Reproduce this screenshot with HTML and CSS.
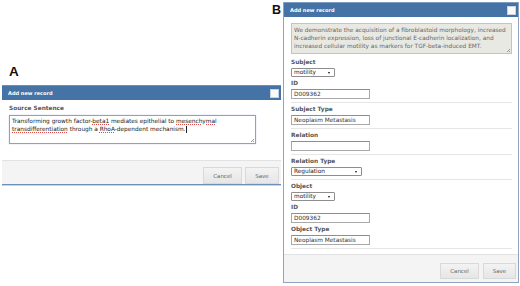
FILE: index.html
```html
<!DOCTYPE html>
<html>
<head>
<meta charset="utf-8">
<link rel="stylesheet" href="styles.css">
</head>
<body>
<div class="figure">
  <div class="col-a">
    <div class="fig-label">A</div>
    <div class="dialog dialog-a">
      <div class="dlg-head"><span class="dlg-title">Add new record</span><span class="chk"></span></div>
      <div class="dlg-body-a">
        <div class="lbl">Source Sentence</div>
        <div class="ta ta-focus">Transforming growth factor-<span class="sp">beta1</span> mediates epithelial to <span class="sp">mesenchymal</span> <span class="sp">transdifferentiation</span> through a <span class="sp">RhoA</span>-dependent mechanism.<span class="caret"></span><span class="grip"></span></div>
      </div>
      <div class="dlg-foot"><span class="btn btn-cancel">Cancel</span><span class="btn btn-save">Save</span></div>
    </div>
  </div>
  <div class="col-b">
    <div class="fig-label fig-label-b">B</div>
    <div class="dialog dialog-b">
      <div class="dlg-head"><span class="dlg-title">Add new record</span><span class="chk"></span></div>
      <div class="dlg-body-b">
        <div class="ta ta-dis">We demonstrate the acquisition of a fibroblastoid morphology, increased N-cadherin expression, loss of junctional E-cadherin localization, and increased cellular motility as markers for TGF-beta-induced EMT.<span class="grip"></span></div>
        <div class="group">
          <div class="field"><div class="lbl">Subject</div><div class="sel sel-s">motility<span class="arr"></span></div></div>
          <div class="field"><div class="lbl">ID</div><div class="inp">D009362</div></div>
        </div>
        <div class="group">
          <div class="field"><div class="lbl">Subject Type</div><div class="inp">Neoplasm Metastasis</div></div>
        </div>
        <div class="group">
          <div class="field"><div class="lbl">Relation</div><div class="inp"></div></div>
        </div>
        <div class="group">
          <div class="field"><div class="lbl">Relation Type</div><div class="sel sel-l">Regulation<span class="arr"></span></div></div>
        </div>
        <div class="group">
          <div class="field"><div class="lbl">Object</div><div class="sel sel-s">motility<span class="arr"></span></div></div>
          <div class="field"><div class="lbl">ID</div><div class="inp">D009362</div></div>
          <div class="field"><div class="lbl">Object Type</div><div class="inp">Neoplasm Metastasis</div></div>
        </div>
      </div>
      <div class="dlg-foot dlg-foot-b"><span class="btn btn-cancel">Cancel</span><span class="btn btn-save">Save</span></div>
    </div>
  </div>
</div>
</body>
</html>
```
FILE: styles.css
```css
html, body { margin: 0; padding: 0; background: #fff; }
body { font-family: "DejaVu Sans", Verdana, sans-serif; font-size: 5.8px; color: #333; }
.figure { display: flex; align-items: flex-start; padding-left: 2px; }
.col-a { width: 279px; padding-top: 64px; }
.col-b { position: relative; width: 236px; margin-left: 2px; margin-top: 2px; }
.fig-label { font-family: "Liberation Sans", Arial, sans-serif; font-weight: bold; font-size: 13.5px; line-height: 15px; color: #111; margin-left: 7px; margin-bottom: 6px; }
.fig-label-b { position: absolute; left: -11px; top: 1px; margin: 0; font-size: 12.5px; }
.dialog { background: #fff; }
.dialog-a { border-bottom: 1px solid #6f90b6; box-shadow: 0 1px 0 #c7d4e4; }
.dialog-b { border: 1px solid #8ea4bf; border-top: none; height: 281px; display: flex; flex-direction: column; box-sizing: border-box; }
.dlg-head { height: 14px; background: #4673a6; border-top: 1px solid #6b90bb; display: flex; align-items: center; justify-content: space-between; padding: 0 2px 0 6px; flex: none; }
.dialog-b .dlg-head { height: 14px; border-top: 1px solid #7d9cc2; }
.dlg-title { color: #fff; font-weight: bold; font-size: 5.1px; letter-spacing: -0.05px; }
.chk { width: 7px; height: 7px; background: #fafafa; border: 1px solid #c8d3df; }
.lbl { font-weight: bold; color: #555; line-height: 8px; font-size: 5.8px; }
.dlg-body-a { padding: 4px 7px 16px 7px; }
.dlg-body-a .lbl { margin-bottom: 3px; }
.ta { position: relative; box-sizing: border-box; line-height: 8px; padding: 1px 2px; }
.ta-focus { width: 247px; height: 29px; border: 1px solid #86a4c8; color: #222; box-shadow: 0 0 1px #aac0dc; }
.sp { text-decoration: underline dotted #e04a4a; text-decoration-thickness: 0.6px; text-underline-offset: 1px; }
.caret { display: inline-block; width: 0.7px; height: 7px; background: #222; margin-left: 1px; vertical-align: -1.5px; }
.grip { position: absolute; right: 1px; bottom: 1px; width: 3px; height: 3px; background: linear-gradient(135deg, transparent 45%, #999 45%, #999 55%, transparent 55%, transparent 75%, #999 75%); }
.dlg-foot { background: #f4f4f4; border-top: 1px solid #e2e2e2; height: 24px; display: flex; justify-content: flex-end; align-items: flex-start; padding: 6px 2px 0 0; box-sizing: border-box; gap: 3px; }
.btn { box-sizing: border-box; height: 17px; border: 1px solid #d9d9d9; background: linear-gradient(#f3f3f3, #e6e6e6); color: #666; display: flex; align-items: center; justify-content: center; font-size: 5.5px; }
.btn-cancel { width: 39px; }
.btn-save { width: 34px; }
.dlg-body-b { padding: 6px 6px 0 7px; flex: 1; }
.ta-dis { width: 221px; height: 31px; background: #e9e9e4; border: 1px solid #c4c4bd; color: #666; padding: 2px 2px; }
.group { border-bottom: 1px solid #e6e6e6; padding: 2px 0 3px; }
.dlg-body-b .ta + .group { padding-top: 4px; }
.field + .field { margin-top: 2px; }
.field .lbl { margin-bottom: 2px; }
.inp { box-sizing: border-box; width: 79px; height: 10px; border: 1px solid #a9a9a9; border-top-color: #8e8e8e; color: #333; padding: 0 2px; line-height: 8px; }
.sel { box-sizing: border-box; height: 9px; border: 1px solid #8e8e8e; color: #222; padding: 0 2px; line-height: 7px; display: flex; justify-content: space-between; align-items: center; border-radius: 1px; }
.sel-s { width: 44px; }
.sel-l { width: 71px; }
.arr { width: 0; height: 0; border-left: 1.5px solid transparent; border-right: 1.5px solid transparent; border-top: 2px solid #111; margin-right: 2px; }
.dlg-foot-b { margin-top: auto; height: 28px; padding-top: 8px; gap: 4px; flex: none; }
.dlg-foot-b .btn { height: 16px; }
.dlg-foot-b .btn-save { width: 33px; }
```
